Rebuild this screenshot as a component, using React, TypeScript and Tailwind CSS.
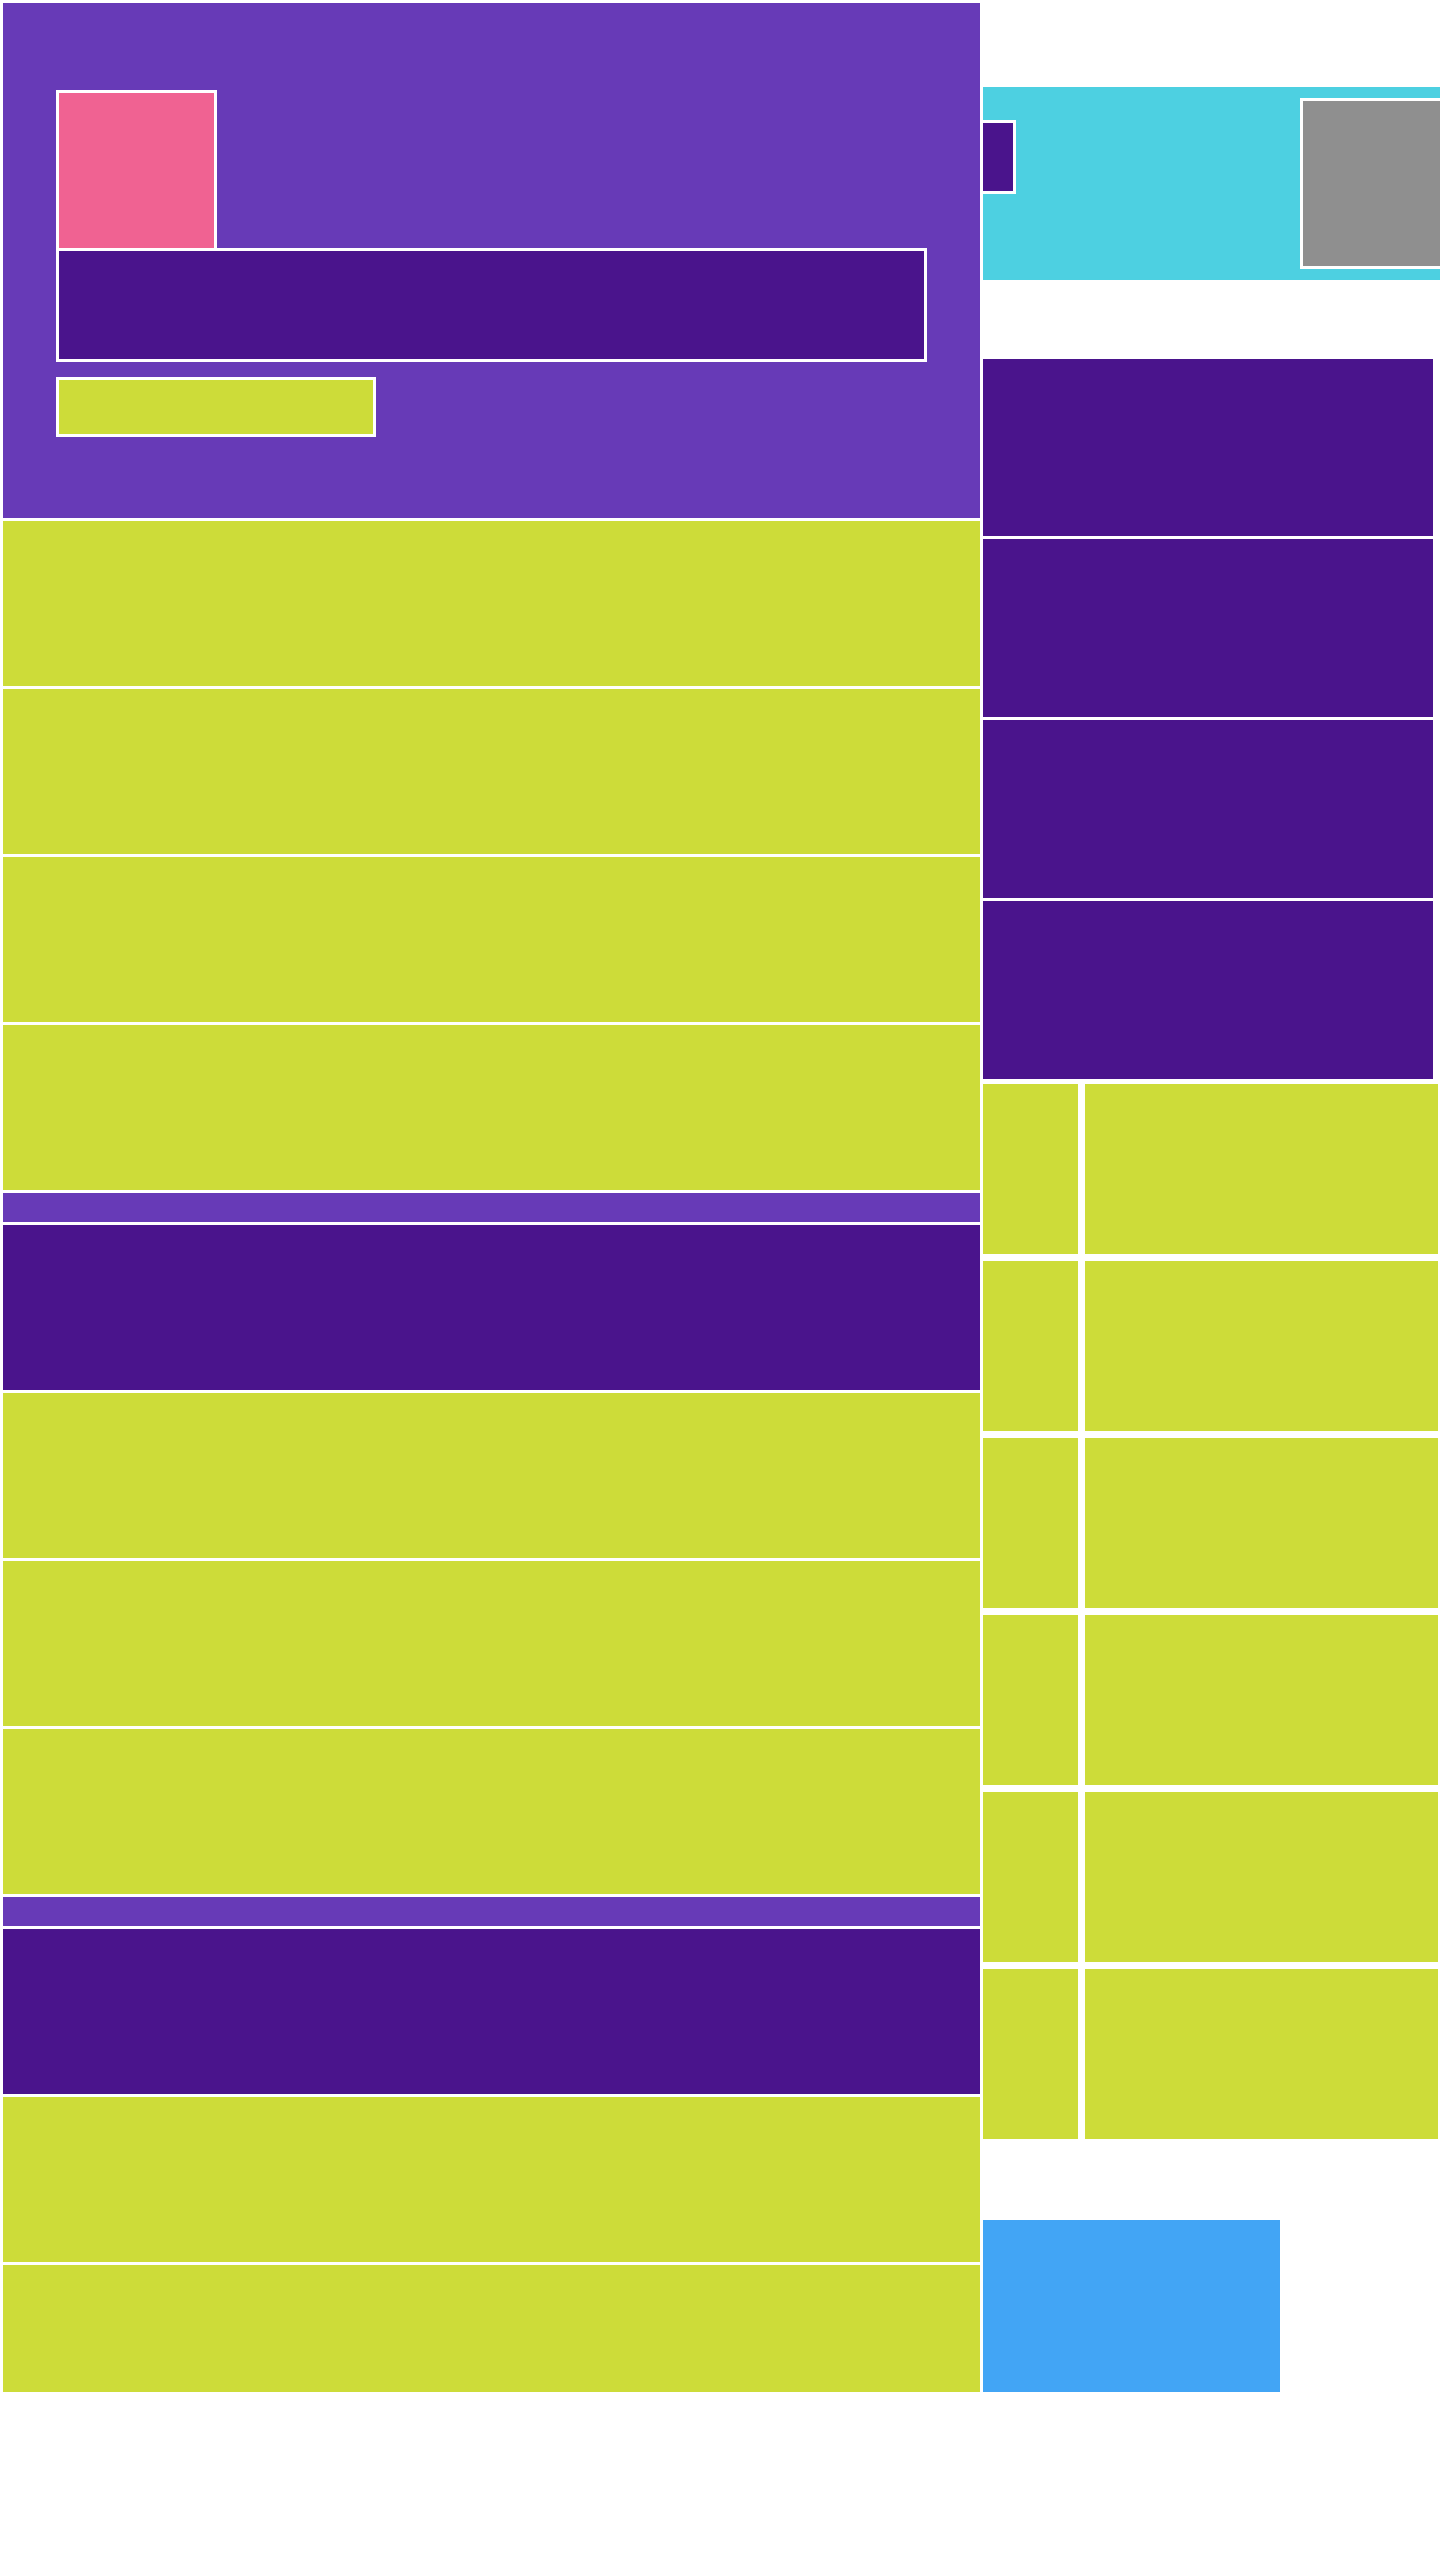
import React from 'react';

const YellowRow = ({ h = 'h-[165px]' }: { h?: string }) => <div className={`${h} bg-[#cddc39]`} />;

const TileRow = () => (
  <div className="flex gap-[7px] h-[170px]">
    <div className="w-[95px] shrink-0 bg-[#cddc39]" />
    <div className="w-[353px] shrink-0 bg-[#cddc39]" />
  </div>
);

export default function App() {
  return (
    <div className="min-h-[2560px] bg-white flex items-start gap-[3px] pl-[3px] pt-[3px] overflow-hidden">
      {/* left column */}
      <div className="w-[977px] shrink-0 flex flex-col gap-[3px]">
        <div className="h-[515px] bg-[#673ab7] pl-[53px] pt-[87px]">
          <div className="w-[161px] h-[158px] bg-[#f06292] border-[3px] border-b-0 border-white" />
          <div className="w-[871px] h-[114px] bg-[#4a148c] border-[3px] border-white" />
          <div className="mt-[15px] w-[320px] h-[60px] bg-[#cddc39] border-[3px] border-white" />
        </div>
        <YellowRow />
        <YellowRow />
        <YellowRow />
        <YellowRow />
        <div className="h-[29px] bg-[#673ab7]" />
        <div className="h-[165px] bg-[#4a148c]" />
        <YellowRow />
        <YellowRow />
        <YellowRow />
        <div className="h-[29px] bg-[#673ab7]" />
        <div className="h-[165px] bg-[#4a148c]" />
        <YellowRow />
        <YellowRow h="h-[127px]" />
      </div>

      {/* right column */}
      <div className="flex-1 flex flex-col">
        <div className="mt-[84px] h-[193px] bg-[#4dd0e1] flex items-start overflow-hidden">
          <div className="mt-[33px] w-[33px] h-[74px] shrink-0 bg-[#4a148c] border-[3px] border-l-0 border-white" />
          <div className="mt-[11px] ml-[284px] w-[170px] h-[171px] shrink-0 bg-[#8f8f8f] border-[3px] border-white" />
        </div>
        <div className="mt-[79px] w-[450px] flex flex-col gap-[3px]">
          <div className="h-[177px] bg-[#4a148c]" />
          <div className="h-[178px] bg-[#4a148c]" />
          <div className="h-[178px] bg-[#4a148c]" />
          <div className="h-[178px] bg-[#4a148c]" />
        </div>
        <div className="mt-[5px] flex flex-col gap-[7px]">
          <TileRow />
          <TileRow />
          <TileRow />
          <TileRow />
          <TileRow />
          <TileRow />
        </div>
        <div className="mt-[81px] w-[297px] h-[172px] bg-[#42a5f5]" />
      </div>
    </div>
  );
}
